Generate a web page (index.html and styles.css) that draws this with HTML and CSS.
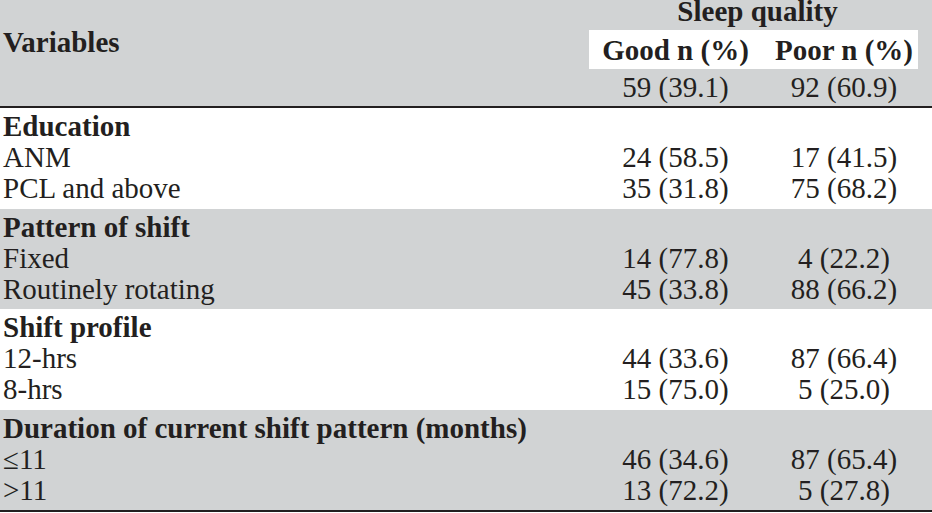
FILE: index.html
```html
<!DOCTYPE html>
<html>
<head>
<meta charset="utf-8">
<link rel="stylesheet" href="styles.css">
</head>
<body>
<div class="table">
  <div class="head">
    <div class="var-label">Variables</div>
    <div class="group-label">Sleep quality</div>
    <div class="band"></div>
    <div class="col-label c2">Good n (%)</div>
    <div class="col-label c3">Poor n (%)</div>
    <div class="total c2">59 (39.1)</div>
    <div class="total c3">92 (60.9)</div>
  </div>

  <div class="section">
    <div class="sec-title">Education</div>
    <div class="name">ANM</div><div class="num">24 (58.5)</div><div class="num c3">17 (41.5)</div>
    <div class="name">PCL and above</div><div class="num">35 (31.8)</div><div class="num c3">75 (68.2)</div>
  </div>

  <div class="section gray">
    <div class="sec-title">Pattern of shift</div>
    <div class="name">Fixed</div><div class="num">14 (77.8)</div><div class="num c3">4 (22.2)</div>
    <div class="name">Routinely rotating</div><div class="num">45 (33.8)</div><div class="num c3">88 (66.2)</div>
  </div>

  <div class="section">
    <div class="sec-title">Shift profile</div>
    <div class="name">12-hrs</div><div class="num">44 (33.6)</div><div class="num c3">87 (66.4)</div>
    <div class="name">8-hrs</div><div class="num">15 (75.0)</div><div class="num c3">5 (25.0)</div>
  </div>

  <div class="section gray last">
    <div class="sec-title">Duration of current shift pattern (months)</div>
    <div class="name">≤11</div><div class="num">46 (34.6)</div><div class="num c3">87 (65.4)</div>
    <div class="name">&gt;11</div><div class="num">13 (72.2)</div><div class="num c3">5 (27.8)</div>
  </div>
</div>
</body>
</html>
```

FILE: styles.css
```css
html, body {
  margin: 0;
  padding: 0;
  background: #ffffff;
}

.table {
  width: 932px;
  font-family: "Liberation Serif", "Times New Roman", serif;
  font-size: 29px;
  line-height: 31px;
  color: #231f20;
}

.head {
  display: grid;
  grid-template-columns: 589px 173px 1fr;
  grid-template-rows: 30px 39px 37px;
  background: #d1d3d4;
  border-bottom: 2px solid #231f20;
}

.var-label {
  grid-column: 1;
  grid-row: 1 / 3;
  font-weight: bold;
  padding: 26.7px 0 0 3px;
}

.group-label {
  grid-column: 2 / 4;
  grid-row: 1;
  font-weight: bold;
  text-align: center;
  margin-top: -4px;
  padding-right: 6px;
}

.band {
  grid-column: 2 / 4;
  grid-row: 2;
  background: #ffffff;
  margin-right: 14px;
}

.col-label {
  grid-row: 2;
  font-weight: bold;
  text-align: center;
  padding-top: 4.7px;
}

.total {
  grid-row: 3;
  text-align: center;
  padding-top: 2.7px;
}

.c2 {
  grid-column: 2;
}

.c3 {
  grid-column: 3;
  padding-right: 6px;
}

.section {
  display: grid;
  grid-template-columns: 589px 173px 1fr;
  height: 100.5px;
  box-sizing: border-box;
  padding-top: 3.2px;
  align-content: start;
}

.section.gray {
  background: #d1d3d4;
}

.section.last {
  border-bottom: 2px solid #231f20;
  height: 102.5px;
}

.sec-title {
  grid-column: 1 / -1;
  font-weight: bold;
  padding-left: 3px;
  white-space: nowrap;
}

.name {
  padding-left: 3px;
  white-space: nowrap;
}

.num {
  text-align: center;
  white-space: nowrap;
}
```
